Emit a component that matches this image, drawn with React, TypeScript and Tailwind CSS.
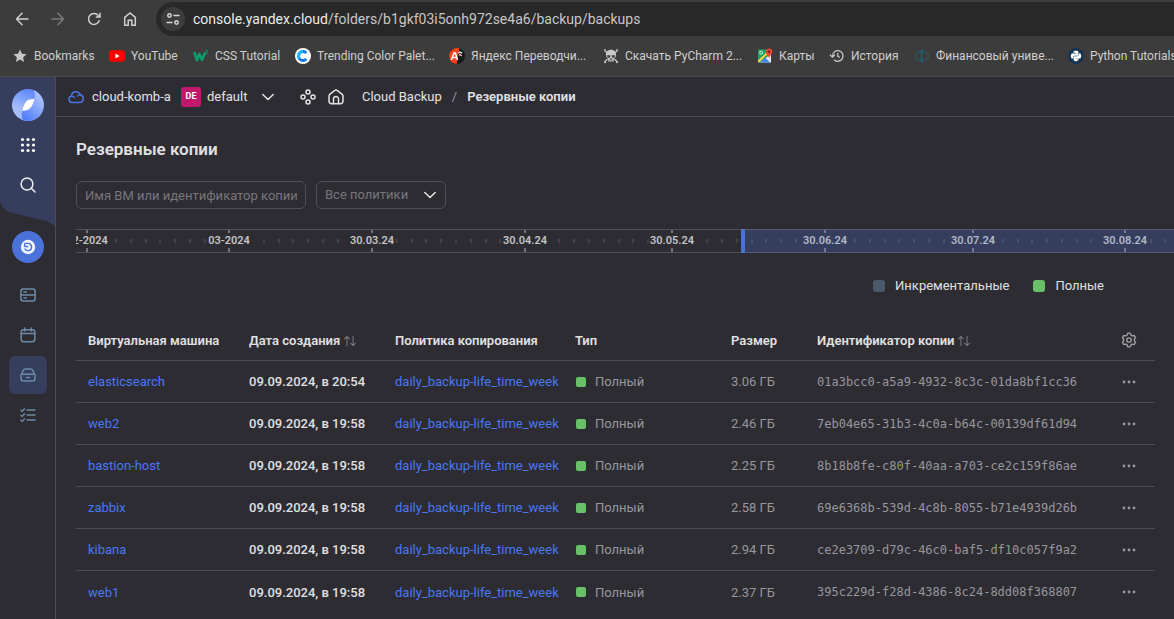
import React from "react";
import { FaPython } from "react-icons/fa";

type IconProps = { className?: string; children: React.ReactNode; box?: string };

function Line({ className = "size-4", children, box = "0 0 16 16" }: IconProps) {
  return (
    <svg
      viewBox={box}
      className={`shrink-0 ${className}`}
      fill="none"
      stroke="currentColor"
      strokeWidth="1.5"
      strokeLinecap="round"
      strokeLinejoin="round"
      aria-hidden="true"
    >
      {children}
    </svg>
  );
}

const bookmarks: { label: string; width: string; icon: React.ReactNode }[] = [
  {
    label: "Bookmarks",
    width: "w-[97px]",
    icon: (
      <svg viewBox="0 0 16 16" className="size-4 shrink-0" fill="#c7c7c7">
        <path d="M8 1.6l1.9 4.2 4.6.5-3.4 3.1.9 4.5L8 11.6l-4 2.3.9-4.5L1.500 6.300l4.600-.5z" />
      </svg>
    ),
  },
  {
    label: "YouTube",
    width: "w-[84px]",
    icon: (
      <svg viewBox="0 0 16 16" className="size-4 shrink-0">
        <rect x="0" y="2.300" width="16" height="11.400" rx="3" fill="#ff0000" />
        <path d="M6.400 5.600v4.800L10.600 8z" fill="#fff" />
      </svg>
    ),
  },
  {
    label: "CSS Tutorial",
    width: "w-[102px]",
    icon: (
      <svg viewBox="0 0 16 16" className="size-4 shrink-0" fill="none" stroke="#0b9e6d">
        <path d="M1.200 4l2.800 8L6.400 6l2.600 6 3.200-7.500" strokeWidth="2.600" strokeLinejoin="round" />
        <path d="M12.600 2.700h2l-1 1.400c1.400 0 1.400 2-.8 1.800" strokeWidth="0.900" />
      </svg>
    ),
  },
  {
    label: "Trending Color Palet...",
    width: "w-[154px]",
    icon: (
      <svg viewBox="0 0 16 16" className="size-4 shrink-0">
        <circle cx="8" cy="8" r="8" fill="#fff" />
        <path d="M11.300 11A4.500 4.500 0 1 1 11.300 5" fill="none" stroke="#1578f0" strokeWidth="3" />
        <path d="M4.300 10.500A4.500 4.500 0 0 1 8 3.500" fill="none" stroke="#25b8ff" strokeWidth="3" />
      </svg>
    ),
  },
  {
    label: "Яндекс Переводчи...",
    width: "w-[154px]",
    icon: (
      <svg viewBox="0 0 16 16" className="size-4 shrink-0">
        <circle cx="8" cy="8" r="8" fill="#191919" />
        <path d="M10.500 0.400A8 8 0 1 0 7.500 16z" fill="#fc3f1d" />
        <path d="M2.300 12L5 5h1.400L8.500 12M3.300 9.500h4" fill="none" stroke="#fff" strokeWidth="1.500" />
        <path d="M8.800 4.500h4.500M11 3v1.500M10 7c2 0 2.500-1 2.500-2.500M10 5.500c.5 1.500 1.500 2 3 2.300" fill="none" stroke="#ddd" strokeWidth="1" />
      </svg>
    ),
  },
  {
    label: "Скачать PyCharm 2...",
    width: "w-[154px]",
    icon: (
      <svg viewBox="0 0 16 16" className="size-4 shrink-0">
        <path d="M1.500 2.500l3 2.500M14.500 2.500l-3 2.500M1.500 14l3-3M14.500 14l-3-3" stroke="#c9c9c9" strokeWidth="1.300" />
        <path d="M1 1.800h1.800M13.200 1.800H15M1 14.500h2M13 14.500h2" stroke="#c9c9c9" strokeWidth="1.200" />
        <path d="M8 1.800c-3.400 0-5 2.200-5 5 0 2 .8 3.200 2.200 4v2.700h5.600v-2.700c1.400-.8 2.200-2 2.200-4 0-2.800-1.600-5-5-5z" fill="#c9c9c9" />
        <path d="M4.300 7.500h2.800l-.4 2H4.800zM8.900 7.500h2.800l-.5 2H9.300zM7.300 10.700h1.400v1H7.300zM6.500 12.300v1.200M8 12.300v1.200M9.500 12.300v1.200" fill="#3c3c3c" stroke="#3c3c3c" strokeWidth="0.500" />
      </svg>
    ),
  },
  {
    label: "Карты",
    width: "w-[72px]",
    icon: (
      <svg viewBox="0 0 16 16" className="size-4 shrink-0">
        <rect x="1" y="1.500" width="13" height="13" rx="1" fill="#1fa463" />
        <path d="M14 6v8.500H3z" fill="#e8e8e8" />
        <path d="M3.500 14.500L8 9.500l5 5z" fill="#4285f4" />
        <path d="M1 12.500L11.500 2.500v2.800L2 14.500H1z" fill="#fdd34a" />
        <circle cx="4.200" cy="4.700" r="1.500" fill="none" stroke="#fff" strokeWidth="0.800" />
        <path d="M12 .5a3.300 3.300 0 0 1 3.300 3.300C15.300 6 13 7 12 10 11 7 8.700 6 8.700 3.800A3.300 3.300 0 0 1 12 .5z" fill="#e6453a" />
        <circle cx="12" cy="3.700" r="1.200" fill="#8d2019" />
      </svg>
    ),
  },
  {
    label: "История",
    width: "w-[85px]",
    icon: (
      <svg viewBox="0 0 16 16" className="size-4 shrink-0" fill="none" stroke="#c7c7c7" strokeWidth="1.300">
        <path d="M3.500 8A5.300 5.300 0 1 1 5 11.700M1 6.800L3.500 9.200 6 6.800M8.800 5v3.300l2 1.200" />
      </svg>
    ),
  },
  {
    label: "Финансовый униве...",
    width: "w-[154px]",
    icon: (
      <svg viewBox="0 0 16 16" className="size-4 shrink-0" fill="none" stroke="#23616a">
        <path d="M5.500 2h4.500M5.500 14h4.500" strokeWidth="0.900" />
        <path d="M7.750 2v12" strokeWidth="1.500" />
        <path d="M7.700 4C3 3.500 1.300 5.500 1.300 8s1.700 4.500 6.400 4c4.700.5 6.700-1.500 6.700-4s-2-4.500-6.700-4z" strokeWidth="1.100" />
      </svg>
    ),
  },
  {
    label: "Python Tutorials",
    width: "w-[120px]",
    icon: (
      <span className="flex size-4 shrink-0 items-center justify-center rounded-full bg-[#17344f] text-white">
        <FaPython className="size-3" />
      </span>
    ),
  },
];

function BrowserBar() {
  return (
    <div className="border-b border-[#4a4a4a] bg-[#3c3c3c]">
      <div className="flex items-center pt-0.5 pl-3.5">
        <div className="flex gap-5 text-[#cfcfcf]">
          <button aria-label="Назад">
            <Line><path d="M14 8H2.500M8 2.300L2.500 8 8 13.700" /></Line>
          </button>
          <button aria-label="Вперёд" className="text-[#7b7b7b]">
            <Line><path d="M2 8h11.500M8 2.300L13.500 8 8 13.700" /></Line>
          </button>
          <button aria-label="Обновить">
            <Line><path d="M13.300 9.300A5.500 5.500 0 1 1 12.300 4.500L14 6M14 1.800V6H9.800" strokeLinecap="butt" strokeLinejoin="miter" /></Line>
          </button>
          <button aria-label="Домой">
            <Line><path d="M2.700 6.400L8 2l5.300 4.400v7.900H9.800V9.300H6.200v5H2.700z" strokeLinejoin="miter" /></Line>
          </button>
        </div>
        <div className="ml-[18px] flex h-[34px] flex-1 items-center gap-2 rounded-l-full bg-[#282828] pl-[5px]">
          <button aria-label="Сведения о сайте" className="flex size-6 items-center justify-center rounded-full bg-[#3c3c3c] text-[#d6d6d6]">
            <Line>
              <circle cx="4.500" cy="4.500" r="1.700" />
              <path d="M9 4.500h5M2 11.500h5" />
              <circle cx="11.500" cy="11.500" r="1.700" />
            </Line>
          </button>
          <div className="text-sm whitespace-nowrap text-[#c7c7c7]">
            <span className="text-[#ececec]">console.yandex.cloud</span>/folders/b1gkf03i5onh972se4a6/backup/backups
          </div>
        </div>
      </div>
      <nav className="flex h-10 items-center overflow-hidden pl-3 text-xs text-[#cfcfcf]" aria-label="Закладки">
        {bookmarks.map((b) => (
          <a key={b.label} href="#" className={`flex shrink-0 items-center gap-1.5 whitespace-nowrap ${b.width}`}>
            {b.icon}
            {b.label}
          </a>
        ))}
      </nav>
    </div>
  );
}

function Sidebar() {
  return (
    <aside className="relative w-14 shrink-0 border-r border-[#4d4c53]">
      <svg className="absolute top-0 left-0 h-[150px] w-[55px]" viewBox="0 0 55 150" aria-hidden="true">
        <path d="M0 0h55v149C50 145 45 143.500 38 142L14 136.500C6 134.500 0 130 0 121z" fill="#353e5d" />
      </svg>
      <div className="relative flex flex-col items-center pt-3 text-[#6c8aa8]">
        <a href="#" aria-label="Yandex Cloud" className="size-8">
          <svg viewBox="0 0 32 32" className="size-8">
            <defs>
              <linearGradient id="orbA" x1="0.700" y1="0" x2="0.300" y2="1">
                <stop offset="0" stopColor="#5682fa" />
                <stop offset="0.700" stopColor="#a6bdfb" />
              </linearGradient>
              <linearGradient id="orbB" x1="0.800" y1="0" x2="0.200" y2="1">
                <stop offset="0.200" stopColor="#a6bdfb" />
                <stop offset="1" stopColor="#4f7df9" />
              </linearGradient>
            </defs>
            <circle cx="16" cy="16" r="16" fill="url(#orbA)" />
            <path d="M21.500 1A16 16 0 0 1 11 31.200C9.200 27 9.500 23.500 10.500 21.500L22 10.500C23.500 7.500 23 4 21.500 1z" fill="url(#orbB)" />
            <path d="M22.300 10c-7-.2-9.800 2.500-12 11.700 7.300.2 9.700-2.700 12-11.700z" fill="#fff" />
          </svg>
        </a>
        <button aria-label="Все сервисы" className="mt-4 text-white">
          <svg viewBox="0 0 16 16" className="size-4" fill="currentColor">
            {[2.5, 8, 13.5].map((y) => [2.5, 8, 13.5].map((x) => <circle key={`${x}-${y}`} cx={x} cy={y} r="1.600" />))}
          </svg>
        </button>
        <button aria-label="Поиск" className="mt-6 text-[#eceef4]">
          <Line><circle cx="7" cy="7" r="5.900" /><path d="M11.300 11.300L15 15" /></Line>
        </button>
        <button aria-label="Cloud Backup" className="mt-[38px] flex size-8 items-center justify-center rounded-full bg-[#4b72d9]">
          <svg viewBox="0 0 16 16" className="size-4">
            <circle cx="8" cy="8" r="7.200" fill="#f2f5ff" />
            <path d="M4.700 9.500A3.600 3.600 0 1 0 8 4.400H4.700M4.400 7.500H8.200M4.600 4.200V7.500" fill="none" stroke="#4b72d9" strokeWidth="1.400" />
          </svg>
        </button>
        <button aria-label="Виртуальные машины" className="mt-6">
          <Line>
            <rect x="0.900" y="1.900" width="14.200" height="12.200" rx="2.500" />
            <path d="M1 8h14M4 5h2.500M4 11h2.500" />
          </Line>
        </button>
        <button aria-label="Политики копирования" className="mt-6">
          <Line>
            <rect x="1.200" y="2.800" width="13.600" height="12" rx="2.500" />
            <path d="M1.200 6.500h13.600M4.700 1v3M11.300 1v3" />
          </Line>
        </button>
        <button aria-label="Резервные копии" className="mt-[13px] flex h-[38px] w-[38px] items-center justify-center rounded-md bg-[#353e5d]">
          <Line>
            <path d="M1 8.200L3 3.900C3.500 2.600 4.200 2.100 5.500 2.100h5c1.300 0 2 .5 2.500 1.800L15 8.200v3.400c0 1.600-.9 2.500-2.500 2.500h-9C1.900 14.100 1 13.200 1 11.600zM1.200 7.200h13.600M6.500 10.600h3" />
          </Line>
        </button>
        <button aria-label="Операции" className="mt-[13px]">
          <Line>
            <path d="M7 3h8M7 8h8M7 13h8M1 3.200l1.200 1.200L4.500 1.700M1 8.200l1.200 1.200L4.500 6.700M1 13.200l1.200 1.200L4.500 11.700" strokeWidth="1.400" />
          </Line>
        </button>
      </div>
    </aside>
  );
}

function Header() {
  return (
    <header className="flex h-10 items-center border-b border-[#4d4c53] pl-3 text-[13px] whitespace-nowrap text-[#e3e3e4]">
      <a href="#" className="flex items-center gap-2">
        <Line className="size-4 text-[#4a74e0]">
          <path d="M4 13.500a3.200 3.200 0 0 1-.6-6.300C3.600 4.500 5.600 2.700 8 2.700c2 0 3.700 1.200 4.300 3 1.800.5 3 2 3 3.900 0 2.200-1.700 3.900-3.900 3.900zM3.500 7.200c1.300-.2 2.200.3 2.800 1.200M12.300 5.700c-1.200.1-2 .5-2.600 1.200" />
        </Line>
        <span className="w-[81px]">cloud-komb-a</span>
      </a>
      <button className="ml-2 flex items-center gap-1.5">
        <span className="flex size-5 items-center justify-center rounded-[3px] bg-[#c2186b] text-[9px] font-bold text-white">DE</span>
        <span className="w-[41px] text-left">default</span>
        <Line className="ml-1.5 size-4"><path d="M2.800 5.500L8 10.500l5.200-5" /></Line>
      </button>
      <button aria-label="Ресурсы" className="ml-6">
        <Line>
          <circle cx="8" cy="3" r="2" />
          <circle cx="8" cy="13" r="2" />
          <circle cx="3" cy="8" r="2" />
          <circle cx="13" cy="8" r="2" />
        </Line>
      </button>
      <a href="#" aria-label="Главная" className="ml-3">
        <Line>
          <path d="M1 7.200c0-.9.300-1.500 1-2.100l4.500-3.500c1-.8 2-.8 3 0L14 5.100c.7.600 1 1.200 1 2.100v4.900c0 1.700-1 2.700-2.700 2.700H3.700C2 14.800 1 13.800 1 12.100zM5.500 14.500V10a2.500 2.500 0 0 1 5 0v4.500" />
        </Line>
      </a>
      <nav className="ml-[18px] flex gap-2.5" aria-label="Навигация">
        <a href="#">Cloud Backup</a>
        <span className="text-[#98979b]">/</span>
        <span className="font-semibold">Резервные копии</span>
      </nav>
    </header>
  );
}

const MAJOR = [
  { x: 11, label: "02-2024" },
  { x: 153, label: "03-2024" },
  { x: 296, label: "30.03.24" },
  { x: 449, label: "30.04.24" },
  { x: 596, label: "30.05.24" },
  { x: 749, label: "30.06.24" },
  { x: 897, label: "30.07.24" },
  { x: 1049, label: "30.08.24" },
];
const MINOR = Array.from({ length: 72 }, (_, i) => Math.round(39 + i * 14.78)).filter((x) =>
  MAJOR.every((m) => Math.abs(m.x - x) > 23),
);
const RANGE_START = 665;

function Timeline() {
  return (
    <svg className="mt-5 block h-6 w-full overflow-hidden" role="img" aria-label="Временная шкала">
      <rect x={RANGE_START} y="0" width="100%" height="24" fill="#353e5d" />
      <path d="M0 .5H665M0 23.500H665" stroke="#504f55" />
      <path d="M665 .5H3000M665 23.500H3000" stroke="#525b78" />
      {MINOR.map((x) => (
        <rect key={x} x={x} y="10" width="2" height="4" fill={x < RANGE_START ? "#434249" : "#485170"} />
      ))}
      {MAJOR.map((m) => (
        <g key={m.label} fill={m.x < RANGE_START ? "#737277" : "#737b94"}>
          <rect x={m.x - 1} y="1" width="2" height="3" />
          <rect x={m.x - 1} y="19" width="2" height="4" />
          <text
            x={m.x}
            y="15"
            textAnchor="middle"
            className="text-[11px] font-semibold"
            fill={m.x < RANGE_START ? "#c4c4c6" : "#b3b9cc"}
          >
            {m.label}
          </text>
        </g>
      ))}
      <rect x={RANGE_START} y="0" width="4" height="24" fill="#4b72d9" />
    </svg>
  );
}

function Sort() {
  return (
    <Line className="ml-[3px] inline-block size-3.5 align-[-3px] text-[#77767b]">
      <path d="M4.500 13.500V3M1.700 5.600L4.500 2.800l2.800 2.800M11.500 2.500V13M8.700 10.400l2.800 2.800 2.800-2.800" strokeWidth="1.200" />
    </Line>
  );
}

const POLICY = "daily_backup-life_time_week";
const rows = [
  { vm: "elasticsearch", time: "20:54", size: "3.06 ГБ", id: "01a3bcc0-a5a9-4932-8c3c-01da8bf1cc36" },
  { vm: "web2", time: "19:58", size: "2.46 ГБ", id: "7eb04e65-31b3-4c0a-b64c-00139df61d94" },
  { vm: "bastion-host", time: "19:58", size: "2.25 ГБ", id: "8b18b8fe-c80f-40aa-a703-ce2c159f86ae" },
  { vm: "zabbix", time: "19:58", size: "2.58 ГБ", id: "69e6368b-539d-4c8b-8055-b71e4939d26b" },
  { vm: "kibana", time: "19:58", size: "2.94 ГБ", id: "ce2e3709-d79c-46c0-baf5-df10c057f9a2" },
  { vm: "web1", time: "19:58", size: "2.37 ГБ", id: "395c229d-f28d-4386-8c24-8dd08f368807" },
];

function BackupsTable() {
  return (
    <table className="mt-[26px] w-full table-fixed border-collapse text-left text-[13px] whitespace-nowrap">
      <colgroup>
        <col className="w-[161px]" />
        <col className="w-[146px]" />
        <col className="w-[180px]" />
        <col className="w-[156px]" />
        <col className="w-[86px]" />
        <col />
        <col className="w-[52px]" />
      </colgroup>
      <thead>
        <tr className="h-[39px] border-b border-[#4d4c53] text-[#e0e0e1] [&>th]:p-0 [&>th]:pl-3 [&>th]:font-semibold">
          <th>Виртуальная машина</th>
          <th>Дата создания<Sort /></th>
          <th>Политика копирования</th>
          <th>Тип</th>
          <th>Размер</th>
          <th>Идентификатор копии<Sort /></th>
          <th>
            <button aria-label="Настройки таблицы" className="flex w-7 justify-center text-[#a3a2a6]">
              <Line>
                <path d="M6.700 1.200h2.600l.6 1.900 1.400.8 2-.4 1.300 2.300L13.300 7.200v1.600l1.300 1.400-1.300 2.300-2-.4-1.400.8-.6 1.900H6.700l-.6-1.900-1.400-.8-2 .4-1.300-2.300 1.300-1.400V7.200L1.400 5.800l1.300-2.300 2 .4 1.400-.8z" strokeWidth="1.300" />
                <circle cx="8" cy="8" r="2.200" strokeWidth="1.300" />
              </Line>
            </button>
          </th>
        </tr>
      </thead>
      <tbody>
        {rows.map((r) => (
          <tr key={r.id} className="h-[42px] border-b border-[#4d4c53] text-[#98979b] last:border-b-0 [&>td]:px-0 [&>td]:pt-0.5 [&>td]:pl-3">
            <td><a href="#" className="text-[#4a77f5]">{r.vm}</a></td>
            <td className="font-medium text-[#e0e0e1]">09.09.2024, в {r.time}</td>
            <td><a href="#" className="text-[#4a77f5]">{POLICY}</a></td>
            <td>
              <span className="flex items-center gap-[9px] pl-px">
                <span className="size-2.5 rounded-xs bg-[#6abf69]" />
                Полный
              </span>
            </td>
            <td>{r.size}</td>
            <td className="font-['DejaVu_Sans_Mono','Liberation_Mono',monospace] text-xs">{r.id}</td>
            <td>
              <button aria-label={`Действия: ${r.vm}`} className="flex w-7 justify-center text-[#98979b]">
                <svg viewBox="0 0 16 16" className="size-4" fill="currentColor">
                  <circle cx="3" cy="8" r="1.400" />
                  <circle cx="8" cy="8" r="1.400" />
                  <circle cx="13" cy="8" r="1.400" />
                </svg>
              </button>
            </td>
          </tr>
        ))}
      </tbody>
    </table>
  );
}

export default function App() {
  return (
    <div className="flex min-h-screen flex-col overflow-x-hidden bg-[#2d2c33] font-[Roboto,'Noto_Sans',sans-serif]">
      <BrowserBar />
      <div className="flex flex-1">
        <Sidebar />
        <div className="min-w-0 flex-1">
          <Header />
          <main className="pt-5 pl-5">
            <h1 className="text-[17px] leading-6 font-semibold text-[#e0e0e1]">Резервные копии</h1>
            <div className="mt-5 flex gap-2.5 text-[13px]">
              <input
                aria-label="Имя ВМ или идентификатор копии"
                placeholder="Имя ВМ или идентификатор копии"
                className="h-7 w-[230px] rounded-md border border-[#504f55] bg-transparent px-2 text-[#e0e0e1] placeholder:text-[#77767b]"
              />
              <div className="relative">
                <select
                  aria-label="Политика"
                  className="h-7 w-[130px] appearance-none rounded-md border border-[#504f55] bg-transparent px-2 text-[#77767b]"
                >
                  <option>Все политики</option>
                </select>
                <Line className="pointer-events-none absolute top-1.5 right-2 size-4 text-[#e3e3e4]">
                  <path d="M2.800 5.500L8 10.500l5.200-5" />
                </Line>
              </div>
            </div>
            <Timeline />
            <div className="mt-6 mr-[70px] flex justify-end gap-6 text-[13px] leading-[18px] text-[#e0e0e1]">
              <span className="flex items-center gap-2.5">
                <span className="size-3 rounded-[3px] bg-[#4b5a6b]" />
                Инкрементальные
              </span>
              <span className="flex items-center gap-2.5">
                <span className="size-3 rounded-[3px] bg-[#6abf69]" />
                Полные
              </span>
            </div>
            <div className="pr-[19px]">
              <BackupsTable />
            </div>
          </main>
        </div>
      </div>
    </div>
  );
}
